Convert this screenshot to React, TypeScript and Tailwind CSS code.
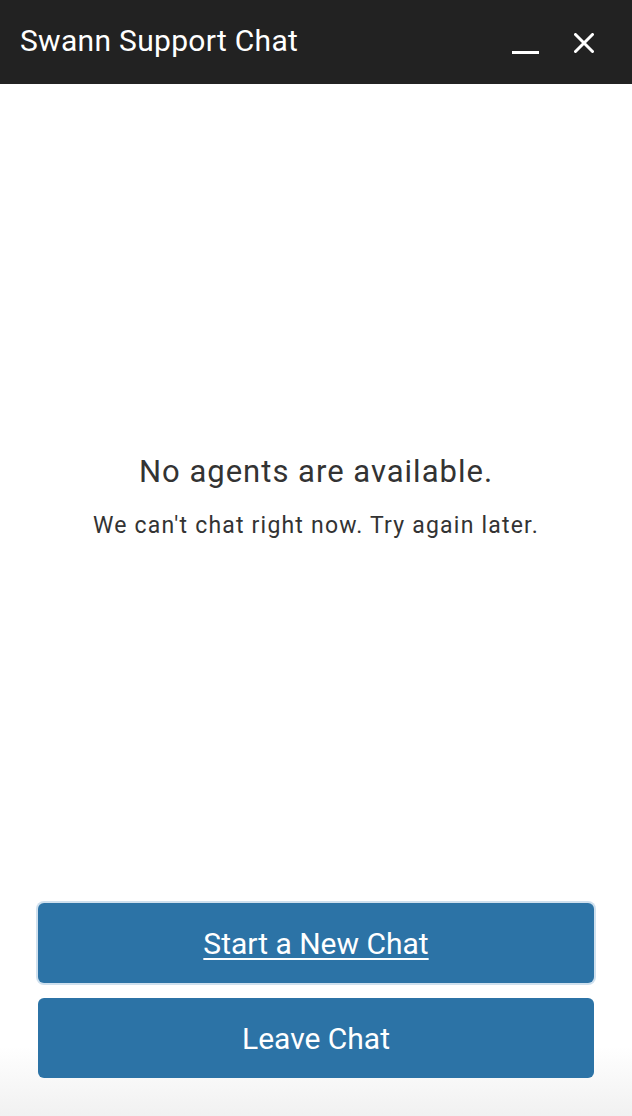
export default function App() {
  return (
    <div className="flex h-[1116px] w-[632px] flex-col bg-white font-['Roboto',sans-serif]">
      <header className="flex h-[84px] shrink-0 items-center justify-between bg-[#222222] pl-5 pr-[38px]">
        <h1 className="mt-[-2px] text-[30px] font-normal leading-none tracking-[0.3px] text-white">Swann Support Chat</h1>
        <div className="flex items-center gap-[35px]">
          <div className="mt-[21px] h-[3px] w-[27px] bg-white" />
          <svg viewBox="0 0 20 20" className="mt-[1px] h-[20px] w-[20px]" fill="none" stroke="white" strokeWidth={3} strokeLinecap="round">
            <path d="M1.5 1.5 L18.5 18.5 M18.5 1.5 L1.5 18.5" />
          </svg>
        </div>
      </header>

      <main className="flex flex-1 flex-col items-center justify-center pt-[26px] text-[#333333]">
        <p className="text-[31px] leading-none tracking-[1px]">No agents are available.</p>
        <p className="mt-[27px] text-[23px] leading-none tracking-[1.2px]">We can't chat right now. Try again later.</p>
      </main>

      <footer className="flex flex-col gap-[15px] bg-gradient-to-b from-white from-[70%] to-[#f1f1f1] px-[38px] pb-[38px] pt-[20px]">
        <button className="h-[80px] rounded-[6px] bg-[#2c73a6] text-[30px] text-white underline decoration-[1.5px] underline-offset-[4px] shadow-[0_0_0_2px_#cfe0ee]">
          Start a New Chat
        </button>
        <button className="h-[80px] rounded-[6px] bg-[#2c73a6] text-[30px] text-white">Leave Chat</button>
      </footer>
    </div>
  );
}
